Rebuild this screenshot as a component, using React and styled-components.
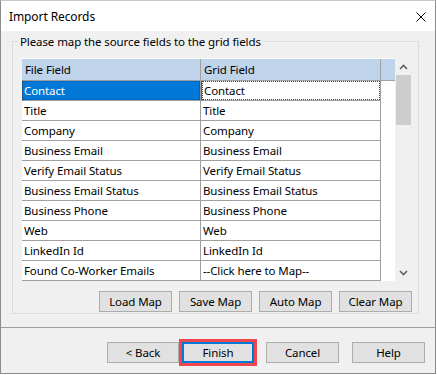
import React from "react";
import styled, { createGlobalStyle } from "styled-components";

const GlobalStyle = createGlobalStyle`
  html, body {
    margin: 0;
    padding: 0;
    background: #ffffff;
  }
  body {
    font-family: "Noto Sans", "Open Sans", sans-serif;
    font-size: 11.5px;
    letter-spacing: -0.1px;
    color: #000;
  }
`;

const rows = [
  ["Contact", "Contact"],
  ["Title", "Title"],
  ["Company", "Company"],
  ["Business Email", "Business Email"],
  ["Verify Email Status", "Verify Email Status"],
  ["Business Email Status", "Business Email Status"],
  ["Business Phone", "Business Phone"],
  ["Web", "Web"],
  ["LinkedIn Id", "LinkedIn Id"],
  ["Found Co-Worker Emails", "--Click here to Map--"],
];

const ImportRecords = () => {
  return (
    <Window>
      <TitleBar>
        <Title>Import Records</Title>
        <CloseIcon width="10" height="10" viewBox="0 0 10 10">
          <path d="M0.5 0.5 L9.5 9.5 M9.5 0.5 L0.5 9.5" stroke="#000" strokeWidth="1" />
        </CloseIcon>
      </TitleBar>
      <Body>
        <GroupBox>
          <Legend>Please map the source fields to the grid fields</Legend>
          <GridArea>
            <DataGrid>
              <HeaderRow>
                <HeaderCell $w={179}>File Field</HeaderCell>
                <HeaderCell $w={180}>Grid Field</HeaderCell>
                <Filler />
              </HeaderRow>
              {rows.map(([file, grid], i) => (
                <GridRow key={file}>
                  <Cell $w={179} $selected={i === 0}>
                    <CellText $selected={i === 0}>{file}</CellText>
                  </Cell>
                  <Cell $w={180} $focused={i === 0}>
                    <CellText $focused={i === 0}>{grid}</CellText>
                  </Cell>
                  <Filler />
                </GridRow>
              ))}
            </DataGrid>
            <ScrollBar>
              <Arrow width="9" height="6" viewBox="0 0 9 6">
                <path d="M1 5 L4.5 1.5 L8 5" fill="none" stroke="#606060" strokeWidth="1.6" />
              </Arrow>
              <Thumb />
              <ScrollSpace />
              <Arrow width="9" height="6" viewBox="0 0 9 6">
                <path d="M1 1 L4.5 4.5 L8 1" fill="none" stroke="#606060" strokeWidth="1.6" />
              </Arrow>
            </ScrollBar>
          </GridArea>
          <ButtonRow>
            <Button>Load Map</Button>
            <Button>Save Map</Button>
            <Button>Auto Map</Button>
            <Button>Clear Map</Button>
          </ButtonRow>
        </GroupBox>
        <Separator />
        <Footer>
          <Button $w={72}>&lt; Back</Button>
          <Button $w={72} $gap={3} $default>Finish</Button>
          <Button $gap={12}>Cancel</Button>
          <Button $gap={13}>Help</Button>
        </Footer>
      </Body>
    </Window>
  );
};

const Window = styled.div`
  width: 436px;
  height: 374px;
  box-sizing: border-box;
  border: 1px solid #8c8c8c;
  border-top-color: #c8c8c8;
  display: flex;
  flex-direction: column;
  background: #f0f0f0;
`;

const TitleBar = styled.div`
  height: 30px;
  background: #ffffff;
  display: flex;
  align-items: center;
  justify-content: space-between;
  padding: 0 9px 0 8px;
`;

const Title = styled.span`
  font-size: 12px;
  padding-top: 1px;
`;

const CloseIcon = styled.svg`
  display: block;
  margin-top: 1px;
`;

const Body = styled.div`
  flex: 1;
  display: flex;
  flex-direction: column;
`;

const GroupBox = styled.fieldset`
  margin: 3px 16px 0 11px;
  padding: 0 6px 0 9px;
  border: 1px solid #dcdcdc;
  min-width: 0;
`;

const Legend = styled.legend`
  padding: 0 2px;
  margin-left: -4px;
  line-height: 15px;
`;

const GridArea = styled.div`
  display: flex;
  margin-top: 9px;
  height: 223px;
`;

const DataGrid = styled.div`
  width: 373px;
  background: #ffffff;
  border-top: 1px solid #ffffff;
  box-sizing: border-box;
`;

const HeaderRow = styled.div`
  display: flex;
  height: 22px;
  box-sizing: border-box;
  background: #bfd3eb;
  border-bottom: 1px solid #a0a0a0;
`;

const HeaderCell = styled.div`
  width: ${(p) => p.$w}px;
  box-sizing: border-box;
  border-right: 1px solid #a0a0a0;
  padding: 0 3px;
  display: flex;
  align-items: center;
`;

const Filler = styled.div`
  flex: 1;
`;

const GridRow = styled.div`
  display: flex;
  height: 20px;
`;

const Cell = styled.div`
  width: ${(p) => p.$w}px;
  box-sizing: border-box;
  border-right: 1px solid #a0a0a0;
  border-bottom: 1px solid #a0a0a0;
  background: ${(p) => (p.$selected ? "#0078d7" : "#ffffff")};
  border-left: ${(p) => (p.$focused ? "1px solid #0078d7" : "none")};
  display: flex;
`;

const CellText = styled.div`
  flex: 1;
  display: flex;
  align-items: center;
  padding: 0 2px;
  color: ${(p) => (p.$selected ? "#ffffff" : "#000000")};
  outline: ${(p) => (p.$selected || p.$focused ? "1px dotted #404040" : "none")};
  outline-offset: -1px;
`;

const ScrollBar = styled.div`
  width: 17px;
  display: flex;
  flex-direction: column;
  align-items: center;
  background: #f0f0f0;
`;

const Arrow = styled.svg`
  display: block;
  margin: 6px 0 5px;
`;

const Thumb = styled.div`
  width: 15px;
  height: 50px;
  background: #cdcdcd;
`;

const ScrollSpace = styled.div`
  flex: 1;
`;

const ButtonRow = styled.div`
  display: flex;
  justify-content: flex-end;
  gap: 7px;
  margin-top: 10px;
  margin-bottom: 1px;
`;

const Button = styled.button`
  width: ${(p) => p.$w || 73}px;
  height: 21px;
  margin-left: ${(p) => p.$gap || 0}px;
  box-sizing: border-box;
  background: #e1e1e1;
  border: ${(p) => (p.$default ? "2px solid #0078d7" : "1px solid #adadad")};
  outline: ${(p) => (p.$default ? "3px solid #f0474e" : "none")};
  font-family: "Noto Sans", "Open Sans", sans-serif;
  font-size: 11.5px;
  letter-spacing: -0.1px;
  color: #000;
  padding: 0;
`;

const Separator = styled.div`
  height: 1px;
  background: #a0a0a0;
  margin-top: 13px;
`;

const Footer = styled.div`
  display: flex;
  justify-content: flex-end;
  padding-right: 10px;
  margin-top: 14px;
`;

export default function App() {
  return (
    <>
      <GlobalStyle />
      <ImportRecords />
    </>
  );
}
